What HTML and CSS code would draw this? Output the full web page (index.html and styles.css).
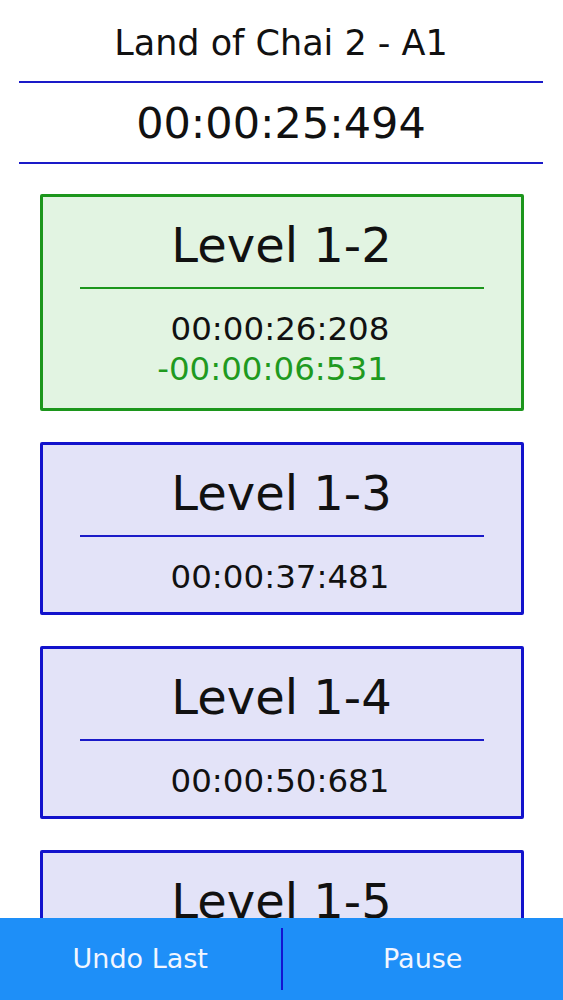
FILE: index.html
```html
<!DOCTYPE html>
<html>
<head>
<meta charset="utf-8">
<link rel="stylesheet" href="styles.css">
</head>
<body>
<div class="page">
  <header class="header">
    <div class="title">Land of Chai 2 - A1</div>
    <div class="rule"></div>
    <div class="timer">00:00:25:494</div>
    <div class="rule"></div>
  </header>
  <main class="cards">
    <section class="card card-done">
      <div class="card-title">Level 1-2</div>
      <div class="card-rule"></div>
      <div class="card-time">00:00:26:208</div>
      <div class="card-delta">-00:00:06:531</div>
    </section>
    <section class="card">
      <div class="card-title">Level 1-3</div>
      <div class="card-rule"></div>
      <div class="card-time">00:00:37:481</div>
    </section>
    <section class="card">
      <div class="card-title">Level 1-4</div>
      <div class="card-rule"></div>
      <div class="card-time">00:00:50:681</div>
    </section>
    <section class="card">
      <div class="card-title">Level 1-5</div>
      <div class="card-rule"></div>
      <div class="card-time">00:01:04:120</div>
    </section>
  </main>
  <footer class="bar">
    <div class="bar-btn">Undo Last</div>
    <div class="bar-sep"></div>
    <div class="bar-btn">Pause</div>
  </footer>
</div>
</body>
</html>
```

FILE: styles.css
```css
html, body {
  margin: 0;
  padding: 0;
  background: #ffffff;
}
body {
  font-family: "DejaVu Sans", Verdana, sans-serif;
  color: #111111;
  height: 1000px;
  overflow: hidden;
}
.page {
  width: 563px;
  height: 1000px;
  position: relative;
  overflow: hidden;
}
.header {
  padding: 21px 20px 0 19px;
  display: flex;
  flex-direction: column;
  align-items: stretch;
}
.title {
  font-size: 35px;
  line-height: 44px;
  text-align: center;
}
.rule {
  height: 2px;
  background: #1a1ac8;
  margin-top: 16px;
}
.timer {
  font-size: 43px;
  line-height: 50px;
  text-align: center;
  margin-top: 15px;
  margin-bottom: -2px;
}
.cards {
  display: flex;
  flex-direction: column;
  align-items: center;
  gap: 31px;
  margin-top: 30px;
}
.card {
  box-sizing: border-box;
  width: 484px;
  border: 3px solid #1212cc;
  background: #e3e3f8;
  border-radius: 2px;
  padding: 20px 37px 15px;
  display: flex;
  flex-direction: column;
  text-align: center;
}
.card-done {
  border-color: #1c961c;
  background: #e2f4e2;
}
.card-title {
  font-size: 48px;
  line-height: 56px;
}
.card-rule {
  height: 2px;
  background: #1a1ac8;
  margin: 14px 0 20px;
}
.card-done .card-rule {
  background: #1c961c;
}
.card-time {
  font-size: 32.5px;
  line-height: 40px;
  padding-right: 3px;
}
.card-delta {
  font-size: 32.5px;
  line-height: 40px;
  padding-bottom: 4px;
  color: #1f9a1f;
  margin-left: -18px;
}
.bar {
  position: absolute;
  left: 0;
  right: 0;
  bottom: 0;
  height: 82px;
  background: #1e8ff8;
  display: flex;
  align-items: center;
}
.bar-btn {
  flex: 1;
  text-align: center;
  color: #f2f6ff;
  font-size: 27px;
  line-height: 40px;
}
.bar-sep {
  width: 2px;
  height: 62px;
  background: #1414d0;
}
```
